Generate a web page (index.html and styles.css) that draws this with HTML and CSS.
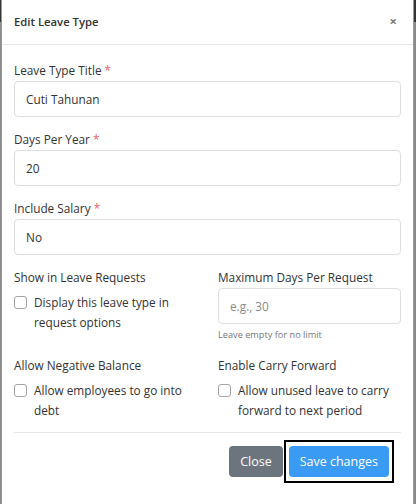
FILE: index.html
```html
<!DOCTYPE html>
<html>
<head>
<meta charset="utf-8">
<link rel="stylesheet" href="styles.css">
</head>
<body>
<div class="modal">
  <div class="modal-header">
    <div class="modal-title">Edit Leave Type</div>
    <span class="close">×</span>
  </div>
  <div class="modal-body">
    <div class="group">
      <label class="label">Leave Type Title <span class="req">*</span></label>
      <div class="input">Cuti Tahunan</div>
    </div>
    <div class="group">
      <label class="label">Days Per Year <span class="req">*</span></label>
      <div class="input">20</div>
    </div>
    <div class="group">
      <label class="label">Include Salary <span class="req">*</span></label>
      <div class="input">No</div>
    </div>
    <div class="row">
      <div class="col">
        <label class="label">Show in Leave Requests</label>
        <div class="check"><span class="box"></span><span class="check-text">Display this leave type in request options</span></div>
      </div>
      <div class="col">
        <label class="label">Maximum Days Per Request</label>
        <div class="input placeholder">e.g., 30</div>
        <div class="help">Leave empty for no limit</div>
      </div>
    </div>
    <div class="row">
      <div class="col">
        <label class="label">Allow Negative Balance</label>
        <div class="check"><span class="box"></span><span class="check-text">Allow employees to go into debt</span></div>
      </div>
      <div class="col">
        <label class="label">Enable Carry Forward</label>
        <div class="check"><span class="box"></span><span class="check-text">Allow unused leave to carry forward to next period</span></div>
      </div>
    </div>
    <div class="footer">
      <button class="btn btn-close">Close</button>
      <button class="btn btn-save">Save changes</button>
    </div>
  </div>
</div>
</body>
</html>
```

FILE: styles.css
```css
* { box-sizing: border-box; }
html, body { margin: 0; padding: 0; }
body {
  width: 416px;
  height: 504px;
  background: linear-gradient(#333 0, #333 22px, #8a8a8a 22px);
  font-family: "Open Sans", "Noto Sans", sans-serif;
  color: #333;
  overflow: hidden;
}
.modal {
  margin-left: 1px;
  width: 413px;
  height: 504px;
  background: #fff;
  border-left: 1px solid #9a9a9a;
  border-right: 1px solid #9a9a9a;
}
.modal-header {
  height: 45px;
  border-bottom: 1px solid #e6e6e6;
  display: flex;
  align-items: center;
  justify-content: space-between;
  padding: 0 16px 2px 12px;
}
.modal-title {
  font-size: 11.3px;
  font-weight: 600;
  color: #333;
}
.close {
  font-size: 13px;
  font-weight: 700;
  color: #777;
  line-height: 1;
}
.modal-body {
  padding: 16px 12px 0 12px;
}
.group { margin-bottom: 13px; }
.label {
  display: block;
  font-size: 11.8px;
  line-height: 18px;
  margin-bottom: 2px;
  color: #333;
}
.req { color: #e8606b; }
.input {
  height: 36px;
  border: 1px solid #dedede;
  border-radius: 4px;
  padding: 0 11px;
  display: flex;
  align-items: center;
  font-size: 11.8px;
  color: #333;
}
.placeholder { color: #8a8a8a; }
.help {
  margin-top: 4px;
  font-size: 9.2px;
  line-height: 13px;
  color: #777;
}
.row {
  display: grid;
  grid-template-columns: 192px 183px;
  column-gap: 12px;
  align-items: start;
  margin-bottom: 15px;
}
.row + .row { margin-bottom: 12px; }
.check {
  display: flex;
  align-items: flex-start;
  margin-top: 6px;
}
.box {
  flex: none;
  width: 13px;
  height: 13px;
  border: 1px solid #a5a5a5;
  border-radius: 3px;
  margin: 4px 7px 0 0;
  background: #fff;
}
.check-text {
  font-size: 11.8px;
  line-height: 20px;
  color: #333;
}
.footer {
  border-top: 1px solid #e6e6e6;
  display: flex;
  justify-content: flex-end;
  gap: 6px;
  padding: 13px 12px 0 0;
}
.btn {
  height: 31px;
  border: none;
  border-radius: 4px;
  color: #fff;
  font-family: "Open Sans", "Noto Sans", sans-serif;
  font-size: 12.5px;
  padding: 0 11px;
}
.btn-close { background: #6c757d; }
.btn-save {
  position: relative;
  background: #3a9bf5;
}
.btn-save::after {
  content: "";
  position: absolute;
  top: -6px;
  bottom: -6px;
  left: -5px;
  right: -5px;
  border: 2px solid #000;
}
```
